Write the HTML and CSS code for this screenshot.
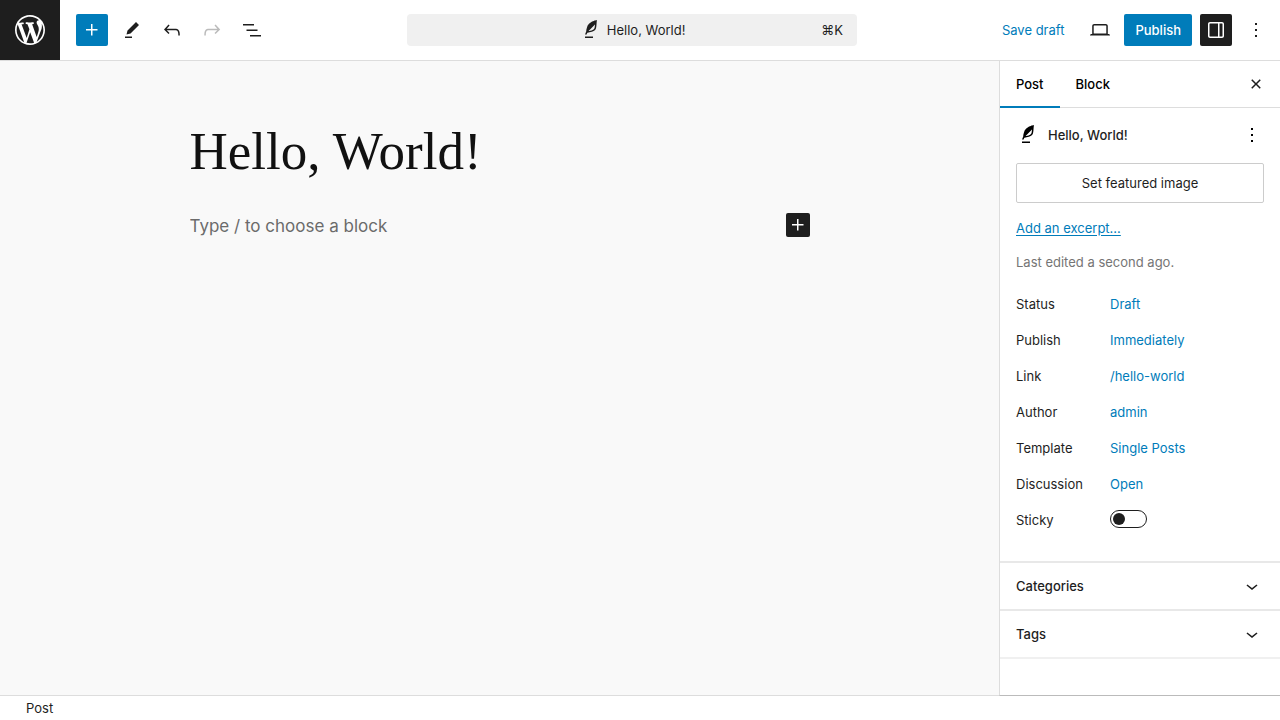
FILE: index.html
```html
<!DOCTYPE html>
<html lang="en">
<head>
<meta charset="utf-8">
<meta name="viewport" content="width=device-width, initial-scale=1">
<title>Edit Post</title>
<link rel="stylesheet" href="styles.css">
</head>
<body>
<svg class="sprite" aria-hidden="true">
  <symbol id="plus" viewBox="0 0 24 24"><path d="M11 12.5V17.5H12.5V12.5H17.5V11H12.5V6H11V11H6V12.5H11Z"/></symbol>
  <symbol id="feather" viewBox="0 0 24 24"><path d="M17.8 2l-.9.3c-.1 0-3.6 1-5.2 2.1C10 5.500 9.300 6.500 8.900 7.100c-.6.9-1.700 4.700-1.700 6.300l-.9 2.300c-.2.4 0 .8.4 1 .1 0 .2.1.3.1.3 0 .6-.2.7-.5l.6-1.500c.3 0 .7-.1 1.200-.2.7-.1 1.400-.3 2.200-.5.8-.2 1.600-.5 2.400-.8.7-.3 1.400-.7 1.900-1.200s.8-1.200 1-1.900c.2-.7.3-1.600.4-2.400.1-.8.1-1.700.2-2.500 0-.8.1-1.500.2-2.100V2zm-1.900 5.600c-.1.8-.2 1.500-.3 2.100-.2.6-.4 1-.6 1.300-.3.3-.8.6-1.400.9-.7.3-1.400.5-2.200.8-.6.2-1.300.3-1.800.4L15 7.500c.3-.3.6-.7 1-1.100 0 .4 0 .8-.1 1.200zM6 20h8v-1.500H6V20z"/></symbol>
  <symbol id="more" viewBox="0 0 24 24"><path d="M13 19h-2v-2h2v2zm0-6h-2v-2h2v2zm0-6h-2V5h2v2z"/></symbol>
  <symbol id="chevron" viewBox="0 0 24 24"><path d="M17.500 11.600L12 16l-5.500-4.400.9-1.200L12 14l4.500-3.600 1 1.200z"/></symbol>
</svg>

<div class="editor">
  <header class="header">
    <div class="tools">
      <a class="site-logo" href="#" aria-label="View posts">
        <svg class="icon-logo" viewBox="-2 -2 24 24"><path d="M20 10c0-5.510-4.490-10-10-10C4.480 0 0 4.490 0 10c0 5.520 4.480 10 10 10 5.510 0 10-4.480 10-10zM7.780 15.370L4.370 6.220c.55-.02 1.170-.08 1.170-.08.5-.06.44-1.130-.06-1.110 0 0-1.450.11-2.370.11-.18 0-.37 0-.58-.01C4.120 2.690 6.870 1.110 10 1.110c2.330 0 4.450.87 6.050 2.340-.68-.11-1.650.39-1.650 1.580 0 .74.45 1.360.9 2.100.35.61.55 1.360.55 2.460 0 1.490-1.400 5-1.400 5l-3.030-8.370c.54-.02.82-.17.82-.17.5-.05.44-1.250-.06-1.220 0 0-1.440.12-2.380.12-.87 0-2.330-.12-2.330-.12-.5-.03-.56 1.200-.06 1.220l.92.08 1.260 3.410zM17.410 10c.24-.64.74-1.870.43-4.250.7 1.290 1.050 2.710 1.050 4.250 0 3.290-1.730 6.240-4.400 7.780.97-2.590 1.940-5.200 2.920-7.780zM6.100 18.090C3.120 16.650 1.110 13.530 1.110 10c0-1.300.23-2.480.72-3.590C3.250 10.300 4.670 14.200 6.100 18.090zm4.030-6.630l2.580 6.980c-.86.29-1.760.45-2.710.45-.79 0-1.570-.11-2.290-.33.81-2.380 1.620-4.740 2.420-7.100z"/></svg>
      </a>
      <div class="tool-list">
        <button class="icon-button primary" type="button" aria-label="Toggle block inserter"><svg class="icon"><use href="#plus"/></svg></button>
        <button class="icon-button" type="button" aria-label="Tools"><svg class="icon" viewBox="0 0 24 24"><path d="m19 7-3-3-8.500 8.500-1 4 4-1L19 7Zm-7 11.500H5V20h7v-1.500Z"/></svg></button>
        <button class="icon-button" type="button" aria-label="Undo"><svg class="icon" viewBox="0 0 24 24"><path d="M18.300 11.700c-.6-.6-1.400-.9-2.300-.9H6.700l2.900-3.300-1.100-1-4.500 5L8.500 16l1-1-2.700-2.700H16c.5 0 .9.2 1.300.5 1 1 1 3.400 1 4.500v.3h1.500v-.2c0-1.500 0-4.300-1.500-5.700z"/></svg></button>
        <button class="icon-button" type="button" aria-label="Redo" disabled><svg class="icon" viewBox="0 0 24 24"><path d="M15.600 6.500l-1.100 1 2.900 3.300H8c-.9 0-1.700.3-2.300.9-1.400 1.500-1.400 4.200-1.400 5.600v.2h1.500v-.3c0-1.100 0-3.500 1-4.500.3-.3.7-.5 1.300-.5h9.200L14.500 15l1.100 1.100 4.600-4.600-4.600-5z"/></svg></button>
        <button class="icon-button" type="button" aria-label="Document overview"><svg class="icon" viewBox="0 0 24 24"><path d="M3 6h11v1.500H3V6Zm3.500 5.500h11V13h-11v-1.500ZM21 17H10v1.500h11V17Z"/></svg></button>
      </div>
    </div>
    <button class="document-bar" type="button">
      <span class="document-title"><svg class="icon"><use href="#feather"/></svg>Hello, World!</span>
      <span class="shortcut">⌘K</span>
    </button>
    <div class="actions">
      <button class="text-button" type="button">Save draft</button>
      <button class="icon-button" type="button" aria-label="View"><svg class="icon" viewBox="0 0 24 24"><path d="M20.500 16h-.7V8c0-1.100-.9-2-2-2H6.200c-1.100 0-2 .9-2 2v8h-.7c-.8 0-1.500.7-1.500 1.500h20c0-.8-.7-1.500-1.500-1.500zM5.700 8c0-.3.2-.5.5-.5h11.600c.3 0 .5.2.5.5v7.600H5.700V8z"/></svg></button>
      <button class="publish" type="button">Publish</button>
      <button class="icon-button pressed" type="button" aria-label="Settings" aria-pressed="true"><svg class="icon" viewBox="0 0 24 24"><path d="M18 4H6c-1.100 0-2 .9-2 2v12c0 1.100.9 2 2 2h12c1.100 0 2-.9 2-2V6c0-1.100-.9-2-2-2zm-4 14.500H6c-.3 0-.5-.2-.5-.5V6c0-.3.2-.5.5-.5h8v13zm4.500-.5c0 .3-.2.5-.5.5h-2.500v-13H18c.3 0 .5.2.5.5v12z"/></svg></button>
      <button class="icon-button" type="button" aria-label="Options"><svg class="icon"><use href="#more"/></svg></button>
    </div>
  </header>

  <div class="body">
    <main class="canvas">
      <article class="post">
        <h1 class="post-title">Hello, World!</h1>
        <div class="block-row">
          <input class="block-input" type="text" aria-label="Empty block" placeholder="Type / to choose a block">
          <button class="inserter" type="button" aria-label="Add block"><svg class="icon"><use href="#plus"/></svg></button>
        </div>
      </article>
    </main>

    <aside class="sidebar">
      <div class="tabs" role="tablist">
        <button class="tab active" type="button" role="tab" aria-selected="true">Post</button>
        <button class="tab" type="button" role="tab" aria-selected="false">Block</button>
        <button class="close" type="button" aria-label="Close settings"><svg class="icon" viewBox="0 0 24 24"><path d="M12 13.060l3.712 3.713 1.061-1.060L13.061 12l3.712-3.712-1.060-1.060L12 10.938 8.288 7.227l-1.061 1.060L10.939 12l-3.712 3.712 1.060 1.061L12 13.061z"/></svg></button>
      </div>
      <section class="summary">
        <div class="card">
          <svg class="icon"><use href="#feather"/></svg>
          <h2 class="card-title">Hello, World!</h2>
          <button class="card-more" type="button" aria-label="Actions"><svg class="icon"><use href="#more"/></svg></button>
        </div>
        <button class="featured" type="button">Set featured image</button>
        <a class="excerpt" href="#">Add an excerpt…</a>
        <p class="edited">Last edited a second ago.</p>
        <div class="rows">
          <div class="row"><span>Status</span><button class="value" type="button">Draft</button></div>
          <div class="row"><span>Publish</span><button class="value" type="button">Immediately</button></div>
          <div class="row"><span>Link</span><button class="value" type="button">/hello-world</button></div>
          <div class="row"><span>Author</span><button class="value" type="button">admin</button></div>
          <div class="row"><span>Template</span><button class="value" type="button">Single Posts</button></div>
          <div class="row"><span>Discussion</span><button class="value" type="button">Open</button></div>
          <div class="row"><label for="sticky">Sticky</label><input class="toggle" id="sticky" type="checkbox" role="switch"></div>
        </div>
      </section>
      <button class="panel" type="button" aria-expanded="false">Categories<svg class="icon"><use href="#chevron"/></svg></button>
      <button class="panel" type="button" aria-expanded="false">Tags<svg class="icon"><use href="#chevron"/></svg></button>
    </aside>
  </div>

  <footer class="footer">Post</footer>
</div>
</body>
</html>
```
FILE: styles.css
```css
*, *::before, *::after { box-sizing: border-box; }

body {
  margin: 0;
  background: #fff;
  color: #1e1e1e;
  font: 13px/20px Inter, "Liberation Sans", sans-serif;
}

button {
  display: flex;
  align-items: center;
  justify-content: center;
  margin: 0;
  padding: 0;
  border: 0;
  border-radius: 2px;
  background: transparent;
  color: inherit;
  font: inherit;
  cursor: pointer;
}

h1, h2, p { margin: 0; font-weight: 400; }

.sprite { display: none; }

.icon {
  flex: none;
  width: 24px;
  height: 24px;
  fill: currentColor;
}

.editor {
  display: flex;
  flex-direction: column;
  min-height: 100vh;
}

/* Header */
.header {
  display: grid;
  grid-template-columns: 1fr minmax(0, 450px) 1fr;
  align-items: center;
  padding-right: 16px;
  border-bottom: 1px solid #ddd;
}

.tools { display: flex; align-items: center; gap: 16px; }

.site-logo {
  display: flex;
  align-items: center;
  justify-content: center;
  width: 60px;
  height: 60px;
  background: #1e1e1e;
  color: #fff;
}

.icon-logo { width: 36px; height: 36px; fill: currentColor; }

.tool-list { display: flex; gap: 8px; }

.icon-button { flex: none; width: 32px; height: 32px; }
.icon-button:disabled { color: #bbb; }

.primary, .publish { background: #007cba; color: #fff; }
.pressed { background: #1e1e1e; color: #fff; }

.document-bar {
  height: 32px;
  padding: 0 14px;
  border-radius: 4px;
  background: #f0f0f0;
}

.document-title {
  display: flex;
  flex: 1;
  align-items: center;
  justify-content: center;
  gap: 4px;
  padding-left: 22px;
}

.actions {
  display: flex;
  align-items: center;
  justify-content: flex-end;
  gap: 8px;
  margin-right: -8px;
}

.text-button { height: 32px; padding: 0 12px; color: #007cba; white-space: nowrap; }
.publish { height: 32px; padding: 0 11px; font-weight: 500; }

/* Editing canvas */
.body { display: flex; flex: 1; }

.canvas { flex: 1; min-width: 0; padding: 58px 24px; background: #f9f9f9; }

.post { max-width: 620px; margin: 0 auto; }

.post-title {
  color: #111;
  font: 400 53px/64px "Liberation Serif", serif;
}

.block-row { display: flex; align-items: center; margin-top: 29px; }

.block-input {
  flex: 1;
  min-width: 0;
  height: 26px;
  padding: 2px 0 0;
  border: 0;
  background: transparent;
  color: #111;
  font: 17px/24px Inter, "Liberation Sans", sans-serif;
}
.block-input::placeholder { color: #6b6b6b; opacity: 1; }

.inserter { width: 24px; height: 24px; background: #1e1e1e; color: #fff; }

/* Settings sidebar */
.sidebar {
  flex: none;
  width: 281px;
  margin-bottom: -1px;
  border-bottom: 1px solid #bbb;
  border-left: 1px solid #ddd;
  background: #fff;
  z-index: 1;
}

.tabs {
  display: flex;
  height: 47px;
  border-bottom: 1px solid #ddd;
}

.tab {
  height: 47px;
  padding: 0 16px 2px;
  border-radius: 0;
  color: #000;
  font-weight: 500;
}
.active { box-shadow: inset 0 -2px #007cba; }

.close { width: 24px; margin: 0 12px 0 auto; }

.summary {
  display: flex;
  flex-direction: column;
  padding: 15px 16px 25px;
}

.card { display: flex; align-items: center; gap: 8px; color: #000; }
.card-title { flex: 1; color: #1e1e1e; font-size: 13px; font-weight: 500; }

.featured { height: 40px; margin-top: 16px; border: 1px solid #ccc; }

.excerpt {
  align-self: flex-start;
  margin-top: 15px;
  color: #007cba;
  text-underline-offset: 2px;
}

.edited { margin-top: 14px; color: #757575; }

.rows { display: grid; gap: 4px; margin-top: 16px; }

.row {
  display: grid;
  grid-template-columns: 94px 1fr;
  align-items: center;
  justify-items: start;
  height: 32px;
}

.value { height: 32px; color: #007cba; }

.toggle {
  display: flex;
  align-items: center;
  appearance: none;
  width: 37px;
  height: 18px;
  margin: 0 0 3px;
  padding: 0 2px;
  border: 1px solid #1e1e1e;
  border-radius: 9px;
  background: #fff;
}
.toggle::before {
  content: "";
  width: 12px;
  height: 12px;
  border-radius: 50%;
  background: #1e1e1e;
}
.toggle:checked { justify-content: flex-end; }

.panel {
  justify-content: space-between;
  width: 100%;
  height: 48px;
  padding: 0 16px;
  border-top: 2px solid #e8e8e8;
  border-radius: 0;
  font-weight: 500;
}
.panel:last-child { height: 50px; border-bottom: 2px solid #f0f0f0; }

.footer {
  padding: 2px 26px;
  border-top: 1px solid #ddd;
}
```
